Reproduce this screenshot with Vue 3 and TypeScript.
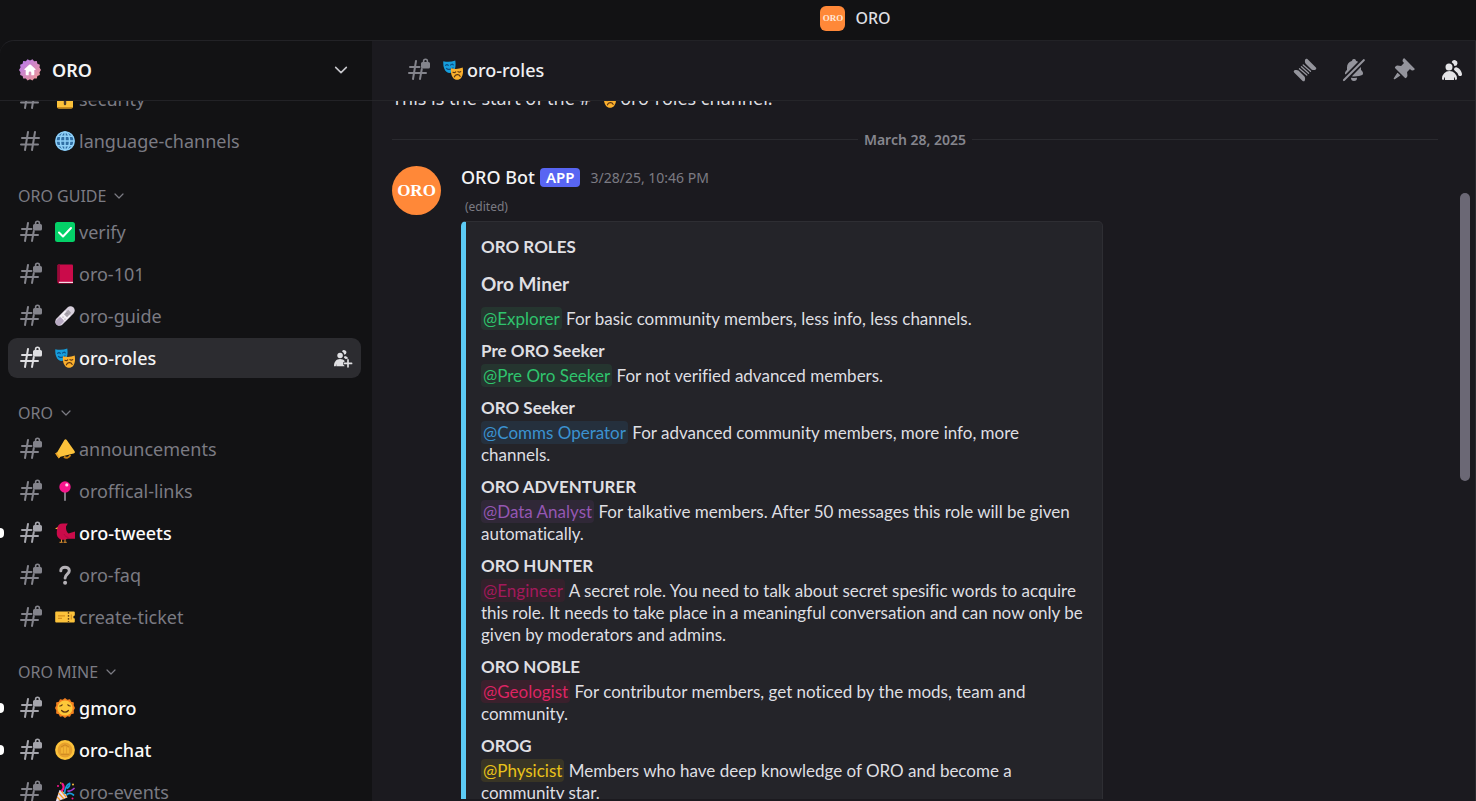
<script setup lang="ts">
interface Channel {
  name: string
  emoji: string
  locked: boolean
  active?: boolean
  unread?: boolean
}

interface Category {
  title: string
  channels: Channel[]
}

interface Role {
  title: string
  mention: string
  tone: string
  text: string
}

const categories: Category[] = [
  {
    title: '',
    channels: [
      { name: 'security', emoji: 'lock', locked: false },
      { name: 'language-channels', emoji: 'globe', locked: false },
    ],
  },
  {
    title: 'ORO GUIDE',
    channels: [
      { name: 'verify', emoji: 'check', locked: true },
      { name: 'oro-101', emoji: 'book', locked: true },
      { name: 'oro-guide', emoji: 'bandage', locked: true },
      { name: 'oro-roles', emoji: 'masks', locked: true, active: true },
    ],
  },
  {
    title: 'ORO',
    channels: [
      { name: 'announcements', emoji: 'megaphone', locked: true },
      { name: 'oroffical-links', emoji: 'pushpin', locked: true },
      { name: 'oro-tweets', emoji: 'bird', locked: true, unread: true },
      { name: 'oro-faq', emoji: 'question', locked: true },
      { name: 'create-ticket', emoji: 'ticket', locked: true },
    ],
  },
  {
    title: 'ORO MINE',
    channels: [
      { name: 'gmoro', emoji: 'sun', locked: true, unread: true },
      { name: 'oro-chat', emoji: 'coin', locked: true, unread: true },
      { name: 'oro-events', emoji: 'party', locked: true },
    ],
  },
]

const roles: Role[] = [
  { title: 'Pre ORO Seeker', mention: '@Pre Oro Seeker', tone: 'green', text: 'For not verified advanced members.' },
  { title: 'ORO Seeker', mention: '@Comms Operator', tone: 'blue', text: 'For advanced community members, more info, more channels.' },
  { title: 'ORO ADVENTURER', mention: '@Data Analyst', tone: 'purple', text: 'For talkative members. After 50 messages this role will be given automatically.' },
  { title: 'ORO HUNTER', mention: '@Engineer', tone: 'wine', text: 'A secret role. You need to talk about secret spesific words to acquire this role. It needs to take place in a meaningful conversation and can now only be given by moderators and admins.' },
  { title: 'ORO NOBLE', mention: '@Geologist', tone: 'pink', text: 'For contributor members, get noticed by the mods, team and community.' },
  { title: 'OROG', mention: '@Physicist', tone: 'gold', text: 'Members who have deep knowledge of ORO and become a community star.' },
]

const tools = [
  { id: 'threads', label: 'Threads' },
  { id: 'bell-off', label: 'Notification settings' },
  { id: 'pin', label: 'Pinned messages' },
  { id: 'members', label: 'Member list', on: true },
]
</script>

<template>
  <div class="window">
    <svg class="sprite" aria-hidden="true">
      <symbol id="i-hash" viewBox="0 0 24 24">
        <path d="M10 3 7 21M17 3l-3 18M4 9h17M3 15.500h17" fill="none" stroke="currentColor" stroke-width="2" stroke-linecap="round" />
      </symbol>
      <symbol id="i-hash-lock" viewBox="0 0 24 24">
        <path d="M10 3 7 21M15.800 11 14 21M4 9h9.500M3 15h17" fill="none" stroke="currentColor" stroke-width="2" stroke-linecap="round" />
        <path fill="currentColor" fill-rule="evenodd" d="M16.500 4h.3v-.8a2.700 2.700 0 0 1 5.400 0V4h.3a1.500 1.500 0 0 1 1.500 1.500V9a1.500 1.500 0 0 1-1.500 1.500h-6A1.500 1.500 0 0 1 15 9V5.500A1.500 1.500 0 0 1 16.500 4Zm4.100 0v-.8a1.100 1.100 0 1 0-2.200 0V4Z" />
      </symbol>
      <symbol id="i-chevron" viewBox="0 0 24 24">
        <path d="m4 8 8 8 8-8" fill="none" stroke="currentColor" stroke-width="2.400" stroke-linecap="round" stroke-linejoin="round" />
      </symbol>
      <symbol id="i-threads" viewBox="0 0 24 24">
        <path fill="currentColor" d="M12.200 1.600c.3-.9 1.500-1.200 2.200-.5l8.500 8.500c.7.700.4 1.900-.5 2.200-1.300.5-2.800.4-3.900-.3l-6-6c-.7-1.100-.8-2.600-.3-3.900ZM11.800 22.400c-.3.900-1.500 1.200-2.200.5l-8.500-8.500c-.7-.7-.4-1.900.5-2.200 1.300-.5 2.800-.4 3.900.3l6 6c.7 1.100.8 2.600.3 3.900Z" />
        <path d="m10.200 7 7.300 6.300M8.400 8.800l7.200 6.400M6.500 10.700l7.300 6.300" fill="none" stroke="currentColor" stroke-width="1.300" stroke-linecap="round" />
      </symbol>
      <symbol id="i-bell-off" viewBox="0 0 24 24">
        <path fill="currentColor" d="M1.300 21.300a1 1 0 1 0 1.400 1.400l20-20a1 1 0 0 0-1.400-1.400l-20 20ZM3.130 16.130c.11.27.46.28.66.08L15.730 4.270a.47.47 0 0 0-.07-.74 6.970 6.970 0 0 0-1.350-.64.62.62 0 0 1-.38-.43 2 2 0 0 0-3.860 0 .62.62 0 0 1-.38.43A7 7 0 0 0 5 9.500v2.090a.5.5 0 0 1-.13.33l-1.100 1.220A3 3 0 0 0 3 15.150v.28c0 .24.04.48.13.7ZM18.640 9.360c.13-.13.36-.05.36.14v2.090c0 .12.05.24.13.33l1.100 1.220a3 3 0 0 1 .77 2.010v.28c0 .67-.34 1.290-.95 1.560-1.310.6-4 1.510-8.050 1.510-.46 0-.9-.01-1.330-.03a.48.48 0 0 1-.3-.83l8.270-8.280ZM9.180 19.840A.16.16 0 0 0 9 20a3 3 0 1 0 6 0c0-.1-.09-.17-.18-.16a24.840 24.840 0 0 1-5.640 0Z" />
      </symbol>
      <symbol id="i-pin" viewBox="0 0 24 24">
        <path fill="currentColor" d="M19.380 11.380a3 3 0 0 0 4.240 0l.03-.03a.5.5 0 0 0 0-.7L13.350.35a.5.5 0 0 0-.7 0l-.03.03a3 3 0 0 0 0 4.240L13 5l-2.920 2.920-3.650-.34a2 2 0 0 0-1.600.58l-.62.63a1 1 0 0 0 0 1.420l9.580 9.580a1 1 0 0 0 1.420 0l.63-.63a2 2 0 0 0 .58-1.600l-.34-3.640L19 11l.38.38ZM9.070 17.070a.5.5 0 0 1-.08.77l-5.150 3.430a.5.5 0 0 1-.63-.06l-.42-.42a.5.5 0 0 1-.06-.63L6.160 15a.5.5 0 0 1 .77-.08l2.140 2.140Z" />
      </symbol>
      <symbol id="i-members" viewBox="0 0 24 24">
        <path fill="currentColor" d="M14.500 8a3 3 0 1 0-2.700-4.300c-.2.4.06.86.44 1.120a5 5 0 0 1 2.140 3.080c.01.06.06.1.12.1ZM16.500 9.200c2.700.9 5.500 4 5.500 7.300 0 .83-.67 1.500-1.500 1.500h-1.060c-.46 0-.85-.3-1-.73a9.530 9.530 0 0 0-3.830-4.780c-.52-.33-.7-1.050-.47-1.630.3-.9.900-2 2.360-1.660ZM12.500 9a3.500 3.500 0 1 1-7 0 3.500 3.500 0 0 1 7 0ZM2 20.500a7.500 7.500 0 0 1 15 0c0 .83-.67 1.500-1.500 1.500a.2.2 0 0 1-.2-.16c-.2-.96-.56-1.870-.88-2.540-.1-.23-.42-.15-.42.1v2.100a.5.5 0 0 1-.5.5h-8a.5.5 0 0 1-.5-.5v-2.100c0-.25-.31-.33-.42-.1-.32.67-.67 1.580-.88 2.540a.2.2 0 0 1-.2.16A1.500 1.500 0 0 1 2 20.500Z" />
      </symbol>
      <symbol id="i-invite" viewBox="0 0 24 24">
        <g fill="currentColor">
          <circle cx="8.500" cy="9" r="3.300" />
          <path d="M10.800 4.200a2.800 2.800 0 1 1 2.800 3.900c-.4-1.700-1.300-3-2.800-3.900ZM13.800 9.600c2.100.3 3.700 1.400 4.500 3-1.200-.1-2 .2-2.700 1-.8-.9-1.600-1.600-2.500-2 .5-.6.700-1.300.7-2Z" />
          <path d="M1.200 21.500C1.200 16.500 4 13.200 8.500 13.200c2.400 0 4.500 1 5.800 2.600-1.500.5-2.300 1.400-2.300 2.800 0 1.300.7 2.200 1.800 2.700v.7H3.900l.4-3-1 3H1.200Z" />
        </g>
        <path d="M18 14.200v8.600M13.700 18.500h8.600" fill="none" stroke="currentColor" stroke-width="2" stroke-linecap="round" />
      </symbol>

      <symbol id="e-lock" viewBox="0 0 20 20">
        <path d="M6 9V5a4 4 0 0 1 8 0v4" fill="none" stroke="#a9a5b5" stroke-width="2" />
        <rect x="2" y="6" width="16" height="13.500" rx="2" fill="#fcc23b" />
        <path d="M2 18h16a2 2 0 0 1-2 1.500H4A2 2 0 0 1 2 18Z" fill="#c98a1c" />
        <path d="M10 11v4" stroke="#4a3a2a" stroke-width="2.400" stroke-linecap="round" />
      </symbol>
      <symbol id="e-globe" viewBox="0 0 20 20">
        <circle cx="10" cy="10" r="9.800" fill="#2f6da3" />
        <g fill="none" stroke="#8fd0f8" stroke-width="1.500">
          <circle cx="10" cy="10" r="9.100" />
          <ellipse cx="10" cy="10" rx="4.600" ry="9" />
          <path d="M10 1v18M1 10h18M3 5.200h14M3 14.800h14" />
        </g>
      </symbol>
      <symbol id="e-check" viewBox="0 0 20 20">
        <rect width="20" height="20" rx="2.500" fill="#04d168" />
        <path d="m4 10.500 4 4 8-8.500" fill="none" stroke="#fff" stroke-width="2" stroke-linecap="round" stroke-linejoin="round" />
      </symbol>
      <symbol id="e-book" viewBox="0 0 20 20">
        <path d="M3.500.5H17a1 1 0 0 1 1 1v18H4a1.500 1.500 0 0 1-1.500-1.500V1.500a1 1 0 0 1 1-1Z" fill="#ca0b4a" />
        <path d="M2.500 1.500a1 1 0 0 1 1-1H5v17H2.500Z" fill="#990838" />
        <path d="M4 17.800h14v1.200H4Z" fill="#f4dce4" />
      </symbol>
      <symbol id="e-bandage" viewBox="0 0 20 20">
        <path d="M4.500 15.500 15.500 4.500" stroke="#d8d0de" stroke-width="8.400" stroke-linecap="round" />
        <path d="m3.500 16.500 2-2" stroke="#b7a9c2" stroke-width="6" stroke-linecap="round" />
        <path d="m10 4.500 5.500 5.500-5.500 5.500L4.500 10Z" fill="#f3eff5" />
        <path d="m13.200 3.800 3 3-4.200 4.500-3-3Z" fill="#a8a3ac" />
        <g fill="#8b8491"><circle cx="8" cy="11" r=".6" /><circle cx="10" cy="13" r=".6" /><circle cx="12" cy="7.500" r=".6" /></g>
      </symbol>
      <symbol id="e-masks" viewBox="0 0 20 20">
        <path d="M.3 1.200c4 1 8 .9 12-.7.6 4.500.3 8-1.400 10.300-1.600 2.200-5 2.900-7.200 1.200C1.100 10-.1 6.200.3 1.200Z" fill="#169ddb" />
        <path d="M2.600 5.400c.8-1 1.900-1 2.700 0M7.600 5c.8-1 1.900-1 2.700-.2M3.500 8.400c2.200 1.500 4.600 1.300 6.600-.5" fill="none" stroke="#0a4f86" stroke-width="1.200" stroke-linecap="round" />
        <path d="M8 8.200c3.800 1.200 7.800 1 11.700-.6.8 4.600.2 8-1.600 10.300-1.700 2.200-5.400 2.500-7.500.5C8.300 16 7.500 12.500 8 8.200Z" fill="#fbb02d" />
        <path d="M10 12.200c1 .6 1.900.4 2.700-.4M15 11.600c.9.700 1.800.7 2.700 0M11.400 16.800c.8-2.800 4.700-3 5.700-.4" fill="none" stroke="#5d3510" stroke-width="1.200" stroke-linecap="round" />
      </symbol>
      <symbol id="e-megaphone" viewBox="0 0 20 20">
        <path d="M9 17.500c2 2.300 5.600 1.200 6.200-1.600" fill="none" stroke="#c57f12" stroke-width="2" />
        <path d="M9.500.8c.7-.9 1.700-.7 2.200.1l7.800 11.200c.7 1.100.3 2.100-.9 2.300L5.500 17.800l-1.800 1.500L.3 14.400l1.900-1.200Z" fill="#fcc23b" />
        <path d="m.3 14.400 1.300-.8 3.300 4.800-1.200 1Z" fill="#e89f25" />
      </symbol>
      <symbol id="e-pushpin" viewBox="0 0 20 20">
        <path d="M10 10v9.300" stroke="#b9b6c0" stroke-width="1.300" stroke-linecap="round" />
        <circle cx="10" cy="6" r="5.700" fill="#f8168d" />
        <circle cx="11.800" cy="3.900" r="1.600" fill="#ffd9ee" />
      </symbol>
      <symbol id="e-bird" viewBox="0 0 20 20">
        <path d="M6.500 16v3M10 16v3M4.500 19.300h3.200M8.500 19.300h3.200" stroke="#e0912f" stroke-width="1" />
        <path d="M0 5.500 3 4v2.500Z" fill="#fcc23b" />
        <path d="M2.300 5.500C2.500 2.500 4.500.5 8 .6h4.800L11 3.500c-.2 3 .5 5.500 2.500 7l6.500-2v7.200h-7.500c-5 2.300-10 .6-10.700-4.500-.2-2 0-3.700.5-5.700Z" fill="#ca0b4a" />
        <path d="M9 11c.8 2 2.500 3.200 4.500 3.500" fill="none" stroke="#ad0a41" stroke-width="1" />
      </symbol>
      <symbol id="e-question" viewBox="0 0 20 20">
        <path d="M5.800 5.800C5.500 1 14.300.9 14.300 5.800c0 3.400-4.200 3.500-4.200 7.200" fill="none" stroke="#b4b1b6" stroke-width="3" stroke-linecap="round" />
        <circle cx="10.100" cy="17.700" r="2" fill="#b4b1b6" />
      </symbol>
      <symbol id="e-ticket" viewBox="0 0 20 20">
        <path d="M1.200 4.500h17.600a1 1 0 0 1 1 1v3a1.500 1.500 0 0 0 0 3v3a1 1 0 0 1-1 1H1.200a1 1 0 0 1-1-1v-9a1 1 0 0 1 1-1Z" fill="#fcc23b" />
        <path d="M13.500 5v10" stroke="#6a4513" stroke-width="1.400" stroke-dasharray="1.800 1.200" />
        <path d="M3 8.800h7M3 11.400h4M16.300 7.500v5" stroke="#d58f1d" stroke-width="1.200" />
      </symbol>
      <symbol id="e-sun" viewBox="0 0 20 20">
        <path d="m10 0 2.300 1.700 2.700-.5 1.200 2.500 2.700.8-.2 2.800L20 10l-1.300 2.600.2 2.800-2.700.8-1.200 2.500-2.700-.4L10 20l-2.300-1.700-2.700.4-1.200-2.500-2.700-.8.2-2.800L0 10l1.300-2.700-.2-2.800 2.700-.8L5 1.200l2.700.5Z" fill="#f5811f" />
        <circle cx="10" cy="10" r="7.600" fill="#fdc83a" />
        <path d="M4.800 8c1 0 1.800-.5 2.300-1.200M15.200 8c-1 0-1.800-.5-2.300-1.200M6.600 12.500c2 2.200 4.800 2.200 6.800 0" fill="none" stroke="#5d3510" stroke-width="1.200" stroke-linecap="round" />
      </symbol>
      <symbol id="e-coin" viewBox="0 0 20 20">
        <circle cx="10" cy="10" r="9.900" fill="#fcc23b" />
        <circle cx="10" cy="10" r="7.400" fill="#e6a02c" />
        <path d="M7 7.500v6M10 6.500v7M13 7.500v6" stroke="#fcc23b" stroke-width="1.200" />
        <path d="M5.800 14.300h8.400M6 7l4-2.200L14 7" fill="none" stroke="#c98420" stroke-width=".9" />
      </symbol>
      <symbol id="e-party" viewBox="0 0 20 20">
        <path d="M4.500 8 .5 20l12-4.500C11 11.500 8.500 8.800 4.500 8Z" fill="#e9dff0" />
        <path d="m3.500 11 5.500 6M2.200 15l3 3.200M6 8.500l5.500 7" stroke="#f5a02c" stroke-width="1.300" />
        <path d="M7 8.500c2-2 2-4.500.5-6.500" fill="none" stroke="#f8168d" stroke-width="2.200" stroke-linecap="round" />
        <path d="M9.500 11C10 7 11 3 14.500 1.500c.5 2-.5 3.500-2 4.500" fill="none" stroke="#169ddb" stroke-width="1.800" stroke-linecap="round" />
        <path d="M13 9c2 .5 4-.5 6-2.500" fill="none" stroke="#a43bd0" stroke-width="1.700" stroke-linecap="round" />
        <path d="M12 12.500c2-1.500 4-1.500 6.500.5" fill="none" stroke="#169ddb" stroke-width="1.700" stroke-linecap="round" />
        <g fill="#f8168d"><circle cx="3" cy="4" r="1" /><circle cx="17.500" cy="16.500" r="1" /></g>
        <g fill="#fcc23b"><circle cx="18" cy="2.500" r="1" /><circle cx="5.800" cy="1" r=".8" /></g>
      </symbol>
    </svg>

    <header class="titlebar">
      <span class="server-icon" aria-hidden="true">ORO</span>
      <span class="titlebar-name">ORO</span>
    </header>

    <div class="body">
      <aside class="sidebar">
        <button type="button" class="server-head">
          <svg class="badge" viewBox="0 0 22 22" aria-hidden="true">
            <defs>
              <linearGradient id="badge-fill" x1="0" y1="0" x2="1" y2="1">
                <stop offset="0" stop-color="#b477f5" />
                <stop offset="1" stop-color="#f29a8e" />
              </linearGradient>
            </defs>
            <path fill="url(#badge-fill)" d="m11 1.400 2.500-1.200 1.600 2 2.700-.1.600 2.600 2.500 1-.4 2.700L22 11l-1.500 2.200.4 2.700-2.500 1-.6 2.600-2.700-.1-1.600 2-2.500-1.200-2.500 1.200-1.600-2-2.700.1-.6-2.600-2.500-1 .4-2.700L0 11l1.500-2.600-.4-2.700 2.500-1 .6-2.600 2.700.1 1.600-2Z" />
            <path fill="#fff" d="M11 5.400c.3 0 .6.100.8.300l4.600 4.200c.5.500.2 1.200-.5 1.200h-.6v4.400c0 .5-.3.800-.8.800h-2.200v-2.600a1.300 1.300 0 0 0-2.600 0v2.600H7.500c-.5 0-.8-.3-.8-.8v-4.400h-.6c-.7 0-1-.7-.5-1.200l4.600-4.200c.2-.2.500-.3.800-.3Z" />
          </svg>
          <span class="server-name">ORO</span>
          <svg class="server-chevron" aria-hidden="true"><use href="#i-chevron" /></svg>
        </button>

        <nav class="channels" aria-label="Channels">
          <div class="channel-scroll">
            <section v-for="cat in categories" :key="cat.title" class="category">
              <button v-if="cat.title" type="button" class="category-title">
                {{ cat.title }}
                <svg aria-hidden="true"><use href="#i-chevron" /></svg>
              </button>
              <ul>
                <li v-for="ch in cat.channels" :key="ch.name" :class="{ active: ch.active, unread: ch.unread }">
                  <a href="#" class="channel">
                    <svg class="hash" aria-hidden="true"><use :href="ch.locked ? '#i-hash-lock' : '#i-hash'" /></svg>
                    <svg class="emoji" aria-hidden="true"><use :href="'#e-' + ch.emoji" /></svg>
                    <span class="channel-name">{{ ch.name }}</span>
                  </a>
                  <button v-if="ch.active" type="button" class="invite" aria-label="Create invite">
                    <svg aria-hidden="true"><use href="#i-invite" /></svg>
                  </button>
                </li>
              </ul>
            </section>
          </div>
        </nav>
      </aside>

      <main class="chat">
        <header class="chat-head">
          <svg class="hash" aria-hidden="true"><use href="#i-hash-lock" /></svg>
          <svg class="emoji" aria-hidden="true"><use href="#e-masks" /></svg>
          <h1>oro-roles</h1>
          <div class="tools">
            <button v-for="tool in tools" :key="tool.id" type="button" :aria-label="tool.label" :class="{ on: tool.on }">
              <svg aria-hidden="true"><use :href="'#i-' + tool.id" /></svg>
            </button>
          </div>
        </header>

        <div class="chat-body">
          <div class="messages">
            <p class="intro">
              This is the start of the #
              <svg class="emoji" aria-hidden="true"><use href="#e-masks" /></svg>
              <span>oro-roles channel.</span>
            </p>

            <div class="divider"><span>March 28, 2025</span></div>

            <article class="message">
              <span class="avatar" aria-hidden="true">ORO</span>
              <div class="content">
                <div class="meta">
                  <span class="author">ORO Bot</span>
                  <span class="tag">APP</span>
                  <time datetime="2025-03-28T22:46">3/28/25, 10:46 PM</time>
                </div>
                <div class="edited">(edited)</div>

                <div class="embed">
                  <h2>ORO ROLES</h2>
                  <h3>Oro Miner</h3>
                  <p><span class="mention green">@Explorer</span> For basic community members, less info, less channels.</p>
                  <dl>
                    <div v-for="role in roles" :key="role.title" class="field">
                      <dt>{{ role.title }}</dt>
                      <dd><span class="mention" :class="role.tone">{{ role.mention }}</span> {{ role.text }}</dd>
                    </div>
                  </dl>
                </div>
              </div>
            </article>
          </div>
          <div class="scrollbar"><div class="thumb"></div></div>
        </div>
      </main>
    </div>
  </div>
</template>

<style>
body {
  margin: 0;
  background: #121214;
}
</style>

<style scoped>
* {
  box-sizing: border-box;
}

.window {
  display: flex;
  flex-direction: column;
  height: 100vh;
  overflow: hidden;
  background: #121214;
  color: #dfdfe2;
  font-family: "Noto Sans", "Open Sans", sans-serif;
  font-size: 16px;
}

.sprite {
  position: absolute;
  width: 0;
  height: 0;
}

button {
  padding: 0;
  border: 0;
  background: none;
  color: inherit;
  font: inherit;
  cursor: pointer;
}

h1,
h2,
h3,
p,
ul,
dl,
dd {
  margin: 0;
  padding: 0;
}

svg {
  flex: none;
}

.titlebar {
  display: flex;
  flex: none;
  align-items: center;
  justify-content: center;
  gap: 10px;
  height: 40px;
  padding: 0 0 4px 235px;
}

.server-icon {
  display: flex;
  align-items: center;
  justify-content: center;
  width: 25px;
  height: 25px;
  border-radius: 6px;
  background: #ff8838;
  color: #ffe9d8;
  font: bold 9px "Liberation Serif", serif;
}

.titlebar-name {
  font-weight: 500;
}

.body {
  display: flex;
  flex: 1;
  min-height: 0;
  border-top: 1px solid #222226;
  border-top-left-radius: 14px;
  overflow: hidden;
}

.sidebar {
  display: flex;
  flex: none;
  flex-direction: column;
  width: 372px;
}

.server-head {
  display: flex;
  flex: none;
  align-items: center;
  height: 60px;
  padding: 0 23px 2px 19px;
  border-bottom: 1px solid #222226;
  text-align: left;
}

.badge {
  width: 22px;
  height: 22px;
}

.server-name {
  flex: 1;
  margin-left: 11px;
  color: #f4f4f5;
  font-size: 18px;
  font-weight: 600;
}

.server-chevron {
  width: 16px;
  height: 16px;
  color: #c5c5ca;
}

.channels {
  flex: 1;
  min-height: 0;
  overflow: hidden;
}

.channel-scroll {
  margin-top: -24px;
}

.category-title {
  display: flex;
  align-items: center;
  gap: 7px;
  height: 24px;
  margin: 23px 0 4px 18px;
  color: #7b7b83;
  font-size: 16px;
}

.category-title svg {
  width: 12px;
  height: 12px;
}

ul {
  list-style: none;
}

li {
  position: relative;
  display: flex;
  align-items: center;
  height: 40px;
  margin: 2px 11px 0 8px;
  padding-right: 8px;
  border-radius: 9px;
  color: #7b7b83;
}

.channel {
  display: flex;
  flex: 1;
  align-items: center;
  height: 100%;
  padding-left: 10px;
  color: inherit;
  font-size: 18px;
  text-decoration: none;
}

.hash {
  width: 24px;
  height: 24px;
  margin-right: 13px;
  color: #84848c;
}

.emoji {
  width: 20px;
  height: 20px;
}

.channel-name {
  margin-left: 4px;
}

.active {
  background: #2c2c30;
  color: #f4f4f5;
}

.active .channel-name,
.unread .channel-name {
  font-weight: 500;
}

.active .hash {
  color: #dfdfe2;
}

.unread {
  color: #fbfbfb;
}

.unread .hash {
  color: #a5a5ac;
}

.unread::before {
  content: "";
  position: absolute;
  top: 15px;
  left: -8px;
  width: 4px;
  height: 10px;
  border-radius: 0 5px 5px 0;
  background: #fff;
}

.invite svg {
  display: block;
  width: 20px;
  height: 20px;
  color: #dfdfe2;
}

.chat {
  display: flex;
  flex: 1;
  flex-direction: column;
  min-width: 0;
  border-right: 1px solid #2a2a2e;
  background: #1b1a1f;
}

.chat-head {
  display: flex;
  flex: none;
  align-items: center;
  height: 60px;
  padding: 0 11px 2px 34px;
  border-bottom: 1px solid #252529;
}

.chat-head h1 {
  flex: 1;
  margin-left: 4px;
  color: #f0f0f2;
  font-size: 18px;
  font-weight: 500;
}

.tools {
  display: flex;
  gap: 25px;
  color: #94949c;
}

.tools .on {
  color: #e4e4e7;
}

.tools svg {
  display: block;
  width: 24px;
  height: 24px;
}

.chat-body {
  display: flex;
  flex: 1;
  min-height: 0;
  margin-bottom: 2px;
  overflow: hidden;
}

.messages {
  flex: 1;
  min-width: 0;
  padding: 0 22px 0 20px;
}

.intro {
  display: flex;
  align-items: center;
  height: 24px;
  margin-top: -15px;
  font-size: 18px;
}

.intro .emoji {
  margin: 0 4px 0 5px;
}

.divider {
  display: flex;
  align-items: center;
  gap: 6px;
  height: 20px;
  margin-top: 19px;
  color: #86868e;
  font-size: 14px;
  font-weight: 600;
}

.divider::before,
.divider::after {
  content: "";
  flex: 1;
  border-top: 1px solid #2a2a2f;
}

.message {
  display: flex;
  gap: 20px;
  margin-top: 17px;
}

.avatar {
  display: flex;
  flex: none;
  align-items: center;
  justify-content: center;
  width: 49px;
  height: 49px;
  border-radius: 50%;
  background: #ff8838;
  color: #fff;
  font: bold 17px "Liberation Serif", serif;
}

.content {
  flex: 1;
  min-width: 0;
}

.meta {
  display: flex;
  align-items: center;
  height: 22px;
}

.author {
  color: #f4f4f5;
  font-size: 18px;
  font-weight: 500;
}

.tag {
  height: 19px;
  margin-left: 5px;
  padding: 0 6px;
  border-radius: 4px;
  background: #5865f2;
  color: #fff;
  font-size: 15px;
  font-weight: 600;
  line-height: 19px;
}

time {
  margin-left: 10px;
  color: #7b7b83;
  font-size: 14px;
}

.edited {
  height: 33px;
  padding-left: 4px;
  color: #7b7b83;
  font-size: 12px;
  line-height: 38px;
}

.embed {
  max-width: 642px;
  padding: 14px 13px 20px 15px;
  border: 1px solid #2e2e33;
  border-left: 5px solid #5ccbf5;
  border-radius: 5px;
  background: #242429;
  font-family: Lato, "Noto Sans", sans-serif;
  font-size: 17px;
  font-variant-ligatures: none;
  line-height: 22px;
}

h2,
dt {
  font-size: 17px;
  font-weight: 700;
}

h3 {
  margin: 14px 0 12px;
  font-size: 19px;
  font-weight: 700;
  line-height: 24px;
}

.field {
  margin-top: 10px;
}

.field dd {
  margin-top: 3px;
}

.mention {
  padding: 1px 2px;
  border-radius: 4px;
}

.green {
  background: #25352f;
  color: #2fc46d;
}

.blue {
  background: #25303d;
  color: #3b92d0;
}

.purple {
  background: #302837;
  color: #9557b2;
}

.wine {
  background: #33212b;
  color: #a3195b;
}

.pink {
  background: #3a202c;
  color: #dd2463;
}

.gold {
  background: #393525;
  color: #e9c21a;
}

.scrollbar {
  flex: none;
  width: 10px;
  margin-right: 5px;
}

.thumb {
  height: 288px;
  margin-top: 92px;
  border-radius: 5px;
  background: #6b6875;
}
</style>
